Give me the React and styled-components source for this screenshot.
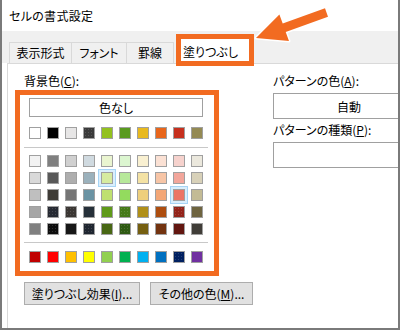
import React from "react";
import styled, { createGlobalStyle, css } from "styled-components";

const ORANGE = "#f26b21";

const topColors = [
  "#ffffff", "#000000", "#e7e6e6", "#3a3a3a*", "#93c11f",
  "#5a9a1f", "#e8b91f", "#e8661b", "#c6301e", "#948a54",
];

const tintRows = [
  ["#f2f2f2", "#7f7f7f", "#d0d0d0", "#d0dae0", "#eaf5d0", "#dcf6d0", "#f9f0d1", "#fbe1d4", "#f6d2cd", "#ebe8dd"],
  ["#d9d9d9", "#595959", "#aeaeae", "#9bb1bc", "#d6eba0", "#b7e89a", "#f4e2a4", "#f7c5a6", "#f2a69b", "#d8d1b9"],
  ["#bfbfbf", "#3f3c37", "#757575", "#6a93a3", "#bfe070", "#93db5e", "#eecf7c", "#f3a675", "#ec7465", "#c3bb95"],
  ["#a6a6a6", "#262a33*", "#3a3633*", "#263039", "#5f9a1a", "#467a18*", "#b08f18", "#ad4d0f", "#93241a*", "#6e6440"],
  ["#808080", "#0d0d0d*", "#171717", "#1f2630*", "#486714", "#2e5a12*", "#755f10", "#733310", "#621610", "#403d38"],
];

const standardColors = [
  "#c00000", "#ff0000", "#ffc000", "#ffff00", "#92d050",
  "#00b050", "#00b0f0", "#0070c0", "#002060*", "#7030a0",
];

// row/col of the swatches drawn with the hover frame
const hovered = ["1-4", "2-8"];

const GlobalStyle = createGlobalStyle`
  html, body { margin: 0; padding: 0; background: #fff; }
  body {
    font-family: "Noto Sans CJK JP", "Noto Sans", sans-serif;
    font-feature-settings: "palt";
    color: #000;
  }
`;

const Frame = styled.div`
  position: relative;
  width: 400px;
  height: 330px;
  box-sizing: border-box;
  border: 2px solid #7a7a7a;
  border-top: none;
  overflow: hidden;
  display: flex;
  flex-direction: column;
  background: #fff;
`;

const TitleBar = styled.div`
  height: 31px;
  padding-left: 7px;
  display: flex;
  align-items: center;
  font-size: 12px;
  letter-spacing: 0.3px;
`;

const TabStrip = styled.div`
  height: 32px;
  background: #f0f0f0;
  display: flex;
  align-items: flex-end;
  padding-left: 7px;
`;

const Tab = styled.div`
  box-sizing: border-box;
  width: ${(p) => p.$w}px;
  height: 21px;
  border: 1px solid #d9d9d9;
  border-bottom: none;
  display: flex;
  align-items: center;
  justify-content: center;
  padding-bottom: 1px;
  font-size: 12px;
  & + & { margin-left: -1px; }
`;

const ActiveTab = styled.div`
  position: relative;
  z-index: 1;
  box-sizing: border-box;
  width: 78px;
  height: 32px;
  margin: 0 0 -3px 2px;
  border: 5px solid ${ORANGE};
  background: #fff;
  display: flex;
  align-items: center;
  padding: 3px 0 0 2px;
  font-size: 12px;
`;

const Panel = styled.div`
  flex: 1;
  margin-left: 5px;
  border-left: 1px solid #d9d9d9;
  border-top: 1px solid #d9d9d9;
  padding-top: 9px;
  display: grid;
  grid-template-columns: 265px 1fr;
  align-items: start;
`;

const Column = styled.div`
  display: flex;
  flex-direction: column;
  min-width: 0;
`;

const Label = styled.div`
  height: 16px;
  line-height: 16px;
  font-size: 12px;
  white-space: nowrap;
  margin-left: ${(p) => p.$indent || 0}px;
  margin-top: ${(p) => p.$top || 0}px;
`;

const Key = styled.u`
  text-decoration: underline;
  text-underline-offset: 1px;
`;

const PaletteBox = styled.div`
  box-sizing: border-box;
  width: 204px;
  height: 186px;
  margin: 1px 0 0 7px;
  border: 5px solid ${ORANGE};
  padding: 3px 11px 8px 9px;
  display: flex;
  flex-direction: column;
`;

const NoColorButton = styled.div`
  box-sizing: border-box;
  height: 19px;
  border: 1px solid #a0a0a0;
  display: flex;
  align-items: center;
  justify-content: center;
  font-size: 12px;
`;

const SwatchRow = styled.div`
  display: flex;
  gap: 6px;
  margin-top: ${(p) => p.$top}px;
`;

const SwatchGrid = styled.div`
  display: grid;
  grid-template-columns: repeat(10, 12px);
  column-gap: 6px;
  row-gap: 5px;
  margin-top: 7px;
`;

const Separator = styled.div`
  height: 1px;
  background: #c8c8c8;
  margin: ${(p) => p.$top}px -5px 0;
`;

const Swatch = styled.div`
  box-sizing: border-box;
  width: 12px;
  height: 12px;
  border: 1px solid #a0a0a0;
  background-color: ${(p) => p.$color};
  ${(p) =>
    p.$dither &&
    css`
      background-image: radial-gradient(rgba(255, 255, 255, 0.14) 35%, transparent 40%);
      background-size: 3px 3px;
    `}
  ${(p) =>
    p.$hover &&
    css`
      box-shadow: 0 0 0 2px #d9eefc, 0 0 0 3px #a6d4f5;
    `}
`;

const ButtonRow = styled.div`
  display: flex;
  gap: 10px;
  margin: 6px 0 0 16px;
`;

const Button = styled.div`
  box-sizing: border-box;
  width: ${(p) => p.$w}px;
  height: 23px;
  background: #e1e1e1;
  border: 1px solid #adadad;
  display: flex;
  align-items: center;
  justify-content: center;
  font-size: 12px;
  white-space: nowrap;
`;

const ComboBox = styled.div`
  box-sizing: border-box;
  flex: none;
  width: 152px;
  height: 26px;
  margin-top: ${(p) => p.$top}px;
  border: 1px solid #a0a0a0;
  display: flex;
  align-items: center;
  justify-content: center;
  font-size: 12px;
`;

const ArrowLayer = styled.svg`
  position: absolute;
  left: -2px;
  top: 0;
  pointer-events: none;
`;

function renderSwatch(value, key, hover) {
  const dither = value.endsWith("*");
  const color = dither ? value.slice(0, -1) : value;
  return <Swatch key={key} $color={color} $dither={dither} $hover={hover} />;
}

export default function App() {
  return (
    <>
      <GlobalStyle />
      <Frame>
        <TitleBar>セルの書式設定</TitleBar>
        <TabStrip>
          <Tab $w={63}>表示形式</Tab>
          <Tab $w={56}>フォント</Tab>
          <Tab $w={48}>罫線</Tab>
          <ActiveTab>塗りつぶし</ActiveTab>
        </TabStrip>
        <Panel>
          <Column>
            <Label $indent={16}>
              背景色(<Key>C</Key>):
            </Label>
            <PaletteBox>
              <NoColorButton>色なし</NoColorButton>
              <SwatchRow $top={10}>
                {topColors.map((c, i) => renderSwatch(c, i, false))}
              </SwatchRow>
              <Separator $top={8} />
              <SwatchGrid>
                {tintRows.map((row, r) =>
                  row.map((c, i) =>
                    renderSwatch(c, `${r}-${i}`, hovered.includes(`${r}-${i}`))
                  )
                )}
              </SwatchGrid>
              <Separator $top={7} />
              <SwatchRow $top={8}>
                {standardColors.map((c, i) => renderSwatch(c, i, false))}
              </SwatchRow>
            </PaletteBox>
            <ButtonRow>
              <Button $w={116}>
                塗りつぶし効果(<Key>I</Key>)...
              </Button>
              <Button $w={103}>
                その他の色(<Key>M</Key>)...
              </Button>
            </ButtonRow>
          </Column>
          <Column>
            <Label>
              パターンの色(<Key>A</Key>):
            </Label>
            <ComboBox $top={4}>自動</ComboBox>
            <Label $top={3}>
              パターンの種類(<Key>P</Key>):
            </Label>
            <ComboBox $top={4} />
          </Column>
        </Panel>
        <ArrowLayer width="400" height="60" viewBox="0 0 400 60">
          <polygon
            points="256,38 289,41 285.7,32 328,16.7 325,8.3 282.7,23.6 279.4,14.6"
            fill={ORANGE}
            stroke="#fff"
            strokeWidth="3"
            strokeLinejoin="round"
            paintOrder="stroke"
          />
        </ArrowLayer>
      </Frame>
    </>
  );
}
